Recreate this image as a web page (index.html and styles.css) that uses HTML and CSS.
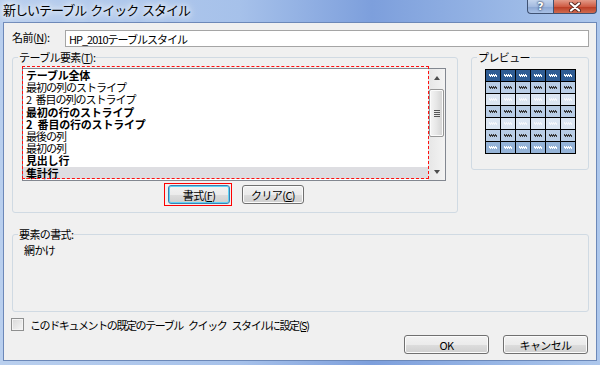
FILE: index.html
```html
<!DOCTYPE html>
<html lang="ja">
<head>
    <meta charset="UTF-8">
    <title>新しいテーブル クイック スタイル</title>
    <link rel="stylesheet" href="styles.css">
</head>
<body>

<div class="window">
    <div class="titlebar">
        <span class="title">新しいテーブル クイック スタイル</span>
        <div class="caption-buttons">
            <span class="cap help">?</span>
            <span class="cap close">
                <svg width="14" height="10" viewBox="0 0 14 10">
                    <path d="M3 1.5 L11 8.5 M11 1.5 L3 8.5" stroke="#5a2a22" stroke-width="4" stroke-linecap="round"/>
                    <path d="M3 1.5 L11 8.5 M11 1.5 L3 8.5" stroke="#fff" stroke-width="2.2" stroke-linecap="round"/>
                </svg>
            </span>
        </div>
    </div>

    <div class="client">
        <div class="name-row">
            <label for="name">名前(<u>N</u>):</label>
            <input type="text" id="name" value="HP_2010テーブルスタイル">
        </div>

        <div class="top-row">
            <fieldset class="group elements">
                <legend>テーブル要素(<u>T</u>):</legend>
                <div class="listbox">
                    <ul class="items">
                        <li class="bold">テーブル全体</li>
                        <li>最初の列のストライプ</li>
                        <li>2 番目の列のストライプ</li>
                        <li class="bold">最初の行のストライプ</li>
                        <li class="bold">2 番目の行のストライプ</li>
                        <li>最後の列</li>
                        <li>最初の列</li>
                        <li class="bold">見出し行</li>
                        <li class="bold selected">集計行</li>
                    </ul>
                    <div class="scrollbar">
                        <span class="arrow up"></span>
                        <span class="thumb"><span class="grip"></span></span>
                        <span class="arrow down"></span>
                    </div>
                    <span class="focus-mark"></span>
                </div>
                <div class="list-buttons">
                    <span class="focus-ring"><button class="btn focused">書式(<u>F</u>)</button></span>
                    <button class="btn">クリア(<u>C</u>)</button>
                </div>
            </fieldset>

            <fieldset class="group preview">
                <legend>プレビュー</legend>
                <div class="grid">
                    <div class="grid-row head"><i></i><i></i><i></i><i></i><i></i><i></i></div>
                    <div class="grid-row band"><i></i><i></i><i></i><i></i><i></i><i></i></div>
                    <div class="grid-row plain"><i></i><i></i><i></i><i></i><i></i><i></i></div>
                    <div class="grid-row band"><i></i><i></i><i></i><i></i><i></i><i></i></div>
                    <div class="grid-row plain"><i></i><i></i><i></i><i></i><i></i><i></i></div>
                    <div class="grid-row band"><i></i><i></i><i></i><i></i><i></i><i></i></div>
                    <div class="grid-row total"><i></i><i></i><i></i><i></i><i></i><i></i></div>
                </div>
            </fieldset>
        </div>

        <fieldset class="group format">
            <legend>要素の書式:</legend>
            <p class="format-text">網かけ</p>
        </fieldset>

        <label class="check"><span class="box"></span>このドキュメントの既定のテーブル クイック スタイルに設定(<u>S</u>)</label>

        <div class="dialog-buttons">
            <button class="btn wide">OK</button>
            <button class="btn wide">キャンセル</button>
        </div>
    </div>
</div>

</body>
</html>
```

FILE: styles.css
```css
* {
    box-sizing: border-box;
}
body {
    margin: 0;
    font-family: "Noto Sans CJK JP", "Noto Sans", sans-serif;
    font-size: 11px;
    color: #000;
}
.window {
    width: 600px;
    height: 365px;
    overflow: hidden;
    background: linear-gradient(90deg, #b9cfee 0%, #a6c1ea 40%, #7d9fdc 62%, #9ab8e6 85%, #adc7ec 100%);
}
.titlebar {
    height: 22px;
    display: flex;
    justify-content: space-between;
    align-items: flex-start;
    padding-left: 3px;
}
.title {
    font-size: 13px;
    letter-spacing: -1px;
    word-spacing: 2px;
    line-height: 20px;
    text-shadow: 0 0 5px #fff, 0 0 9px #fff, 0 0 12px #fff;
}
.caption-buttons {
    display: flex;
    margin-right: 3px;
}
.cap {
    height: 14px;
    display: flex;
    align-items: center;
    justify-content: center;
    border: 1px solid #3f5273;
    border-top: none;
}
.help {
    width: 26px;
    border-radius: 0 0 0 4px;
    border-right: none;
    background: linear-gradient(#c3d4ed, #a4bbe0 50%, #8ba6d2 51%, #a9c1e6);
    color: #fff;
    font-family: "DejaVu Sans", sans-serif;
    font-weight: bold;
    font-size: 11px;
    line-height: 13px;
    text-shadow: 0 0 2px #2c3e5e, 0 0 2px #2c3e5e;
}
.close {
    width: 44px;
    border-radius: 0 0 4px 0;
    background: linear-gradient(#e39a88, #cf5d45 50%, #b93a22 51%, #cf6a4f);
}
.client {
    margin: 0 3px;
    height: 339px;
    background: #f0f0f0;
    border: 1px solid #6c88b8;
    padding: 7px 7px 0 8px;
}
.name-row {
    display: flex;
    height: 17px;
}
.name-row label {
    width: 53px;
    line-height: 15px;
    letter-spacing: -0.5px;
}
.name-row input {
    flex: 1;
    height: 17px;
    border: 1px solid #a5a5a5;
    font-family: inherit;
    font-size: 11px;
    letter-spacing: -1px;
    padding: 0 3px;
    background: #fff;
}
.top-row {
    display: flex;
    gap: 13px;
    margin-top: 4px;
    align-items: flex-start;
}
.group {
    margin: 0;
    padding: 0;
    min-width: 0;
    border: 1px solid #d0dae3;
    border-radius: 3px;
}
.group legend {
    margin-left: 5px;
    padding: 0 1px;
    line-height: 12px;
    letter-spacing: -0.6px;
}
.elements {
    width: 446px;
    height: 162px;
}
.listbox {
    position: relative;
    display: flex;
    margin: 5px 0 0 9px;
    width: 424px;
    height: 113px;
    border: 1px solid #828790;
    background: #fff;
}
.items {
    list-style: none;
    margin: 0;
    padding: 0;
    flex: 1;
}
.items li {
    height: 12.2px;
    line-height: 12px;
    padding-left: 3px;
    letter-spacing: -1px;
    word-spacing: 3px;
    white-space: nowrap;
}
.items li.bold {
    font-weight: bold;
    letter-spacing: -0.2px;
}
.items li.selected {
    background: #dedee2;
}
.focus-mark {
    position: absolute;
    left: -1px;
    top: -3px;
    width: 407px;
    height: 113px;
    border: 1px dashed #ff1010;
    pointer-events: none;
}
.scrollbar {
    width: 17px;
    display: flex;
    flex-direction: column;
    background: linear-gradient(90deg, #e6e6e6, #f3f3f3);
}
.arrow {
    height: 17px;
    display: flex;
    align-items: center;
    justify-content: center;
}
.arrow::before {
    content: "";
    border-left: 3.5px solid transparent;
    border-right: 3.5px solid transparent;
}
.arrow.up::before {
    border-bottom: 4px solid #4d4d4d;
}
.arrow.down {
    margin-top: auto;
}
.arrow.down::before {
    border-top: 4px solid #4d4d4d;
}
.thumb {
    margin: 3px 1px 0;
    height: 48px;
    border: 1px solid #979797;
    border-radius: 2px;
    background: linear-gradient(90deg, #f5f5f5, #e6e6e6 50%, #d2d2d2);
    box-shadow: inset 0 0 0 1px #fbfbfb;
    display: flex;
    align-items: center;
    justify-content: center;
}
.grip {
    width: 6px;
    height: 7px;
    background: repeating-linear-gradient(#555 0 1px, transparent 1px 2px);
}
.list-buttons {
    display: flex;
    justify-content: center;
    align-items: center;
    gap: 10px;
    margin: 2px 0 0 9px;
    width: 424px;
}
.focus-ring {
    display: flex;
    border: 1px solid #ff0000;
    padding: 1px 1px 1px 3px;
}
.btn {
    height: 19px;
    padding: 0;
    border: 1px solid #707070;
    border-radius: 3px;
    background: linear-gradient(#f2f2f2, #ebebeb 50%, #dddddd 51%, #cfcfcf);
    box-shadow: inset 0 0 0 1px #fbfbfb;
    font-family: inherit;
    font-size: 11px;
    line-height: 16px;
    letter-spacing: -0.6px;
    color: #000;
}
.list-buttons .btn {
    width: 62px;
}
.btn.focused {
    border-color: #3c7fb1;
    box-shadow: inset 0 0 0 1px #5ed3f5;
}
.preview {
    width: 118px;
    height: 119px;
}
.grid {
    width: 91px;
    margin: 6px auto 0;
    display: flex;
    flex-direction: column;
    gap: 1px;
    border: 1px solid #000;
    background: #000;
}
.grid-row {
    display: flex;
    gap: 1px;
}
.grid-row i {
    width: 14px;
    height: 11px;
    display: flex;
    align-items: center;
    justify-content: center;
}
.grid-row i::after {
    content: "";
    width: 8px;
    height: 3px;
    background:
        repeating-linear-gradient(90deg, currentColor 0 1px, transparent 1px 2px) top / 100% 1px no-repeat,
        linear-gradient(currentColor, currentColor) center / 100% 1px no-repeat,
        repeating-linear-gradient(90deg, transparent 0 1px, currentColor 1px 2px) bottom / 100% 1px no-repeat;
}
.head i {
    background: #305d94;
    color: #fff;
}
.band i {
    background: #b9cde5;
    color: #3a3a3a;
}
.plain i {
    background: #dce6f2;
    color: #f4f6fa;
}
.total i {
    background: #95b3d7;
    color: #fff;
}
.format {
    margin-top: 15px;
    height: 84px;
}
.format-text {
    margin: 4px 0 0 11px;
    line-height: 12px;
    letter-spacing: -0.6px;
}
.check {
    display: flex;
    align-items: center;
    margin: 6px 0 0 -1px;
    height: 13px;
    letter-spacing: -1.4px;
    word-spacing: 4px;
    white-space: nowrap;
}
.box {
    width: 13px;
    height: 13px;
    margin-right: 6px;
    border: 1px solid #8e8f8f;
    background: linear-gradient(135deg, #d8d8d8, #f6f6f6);
    box-shadow: inset 0 0 0 1px #f4f4f4;
}
.dialog-buttons {
    display: flex;
    justify-content: flex-end;
    gap: 14px;
    margin: 4px 1px 0 0;
}
.btn.wide {
    width: 85px;
}
```
